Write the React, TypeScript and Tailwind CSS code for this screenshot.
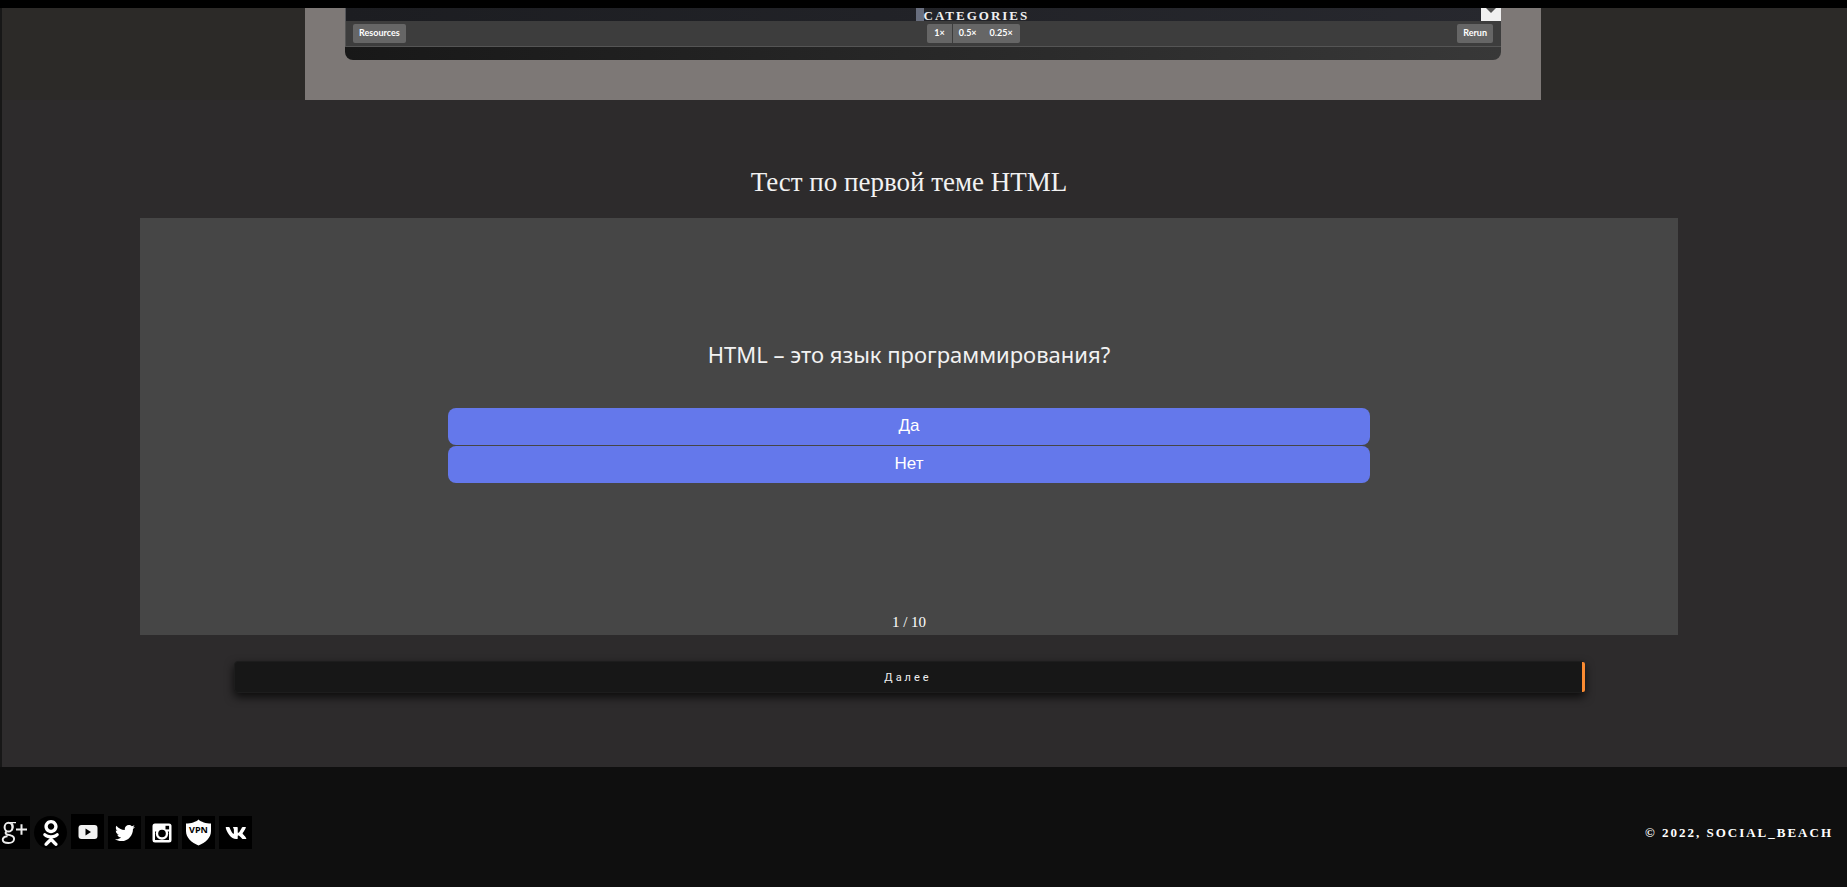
import React, { useState } from "react";
import { FaOdnoklassniki, FaTwitter, FaVk } from "react-icons/fa";

const penButton =
  "h-[19px] bg-[#666666] font-['Lato',sans-serif] text-[9px] leading-[15px] pb-[3px] font-bold text-white";

function PenFooter() {
  return (
    <div className="mr-[306px] ml-[305px] bg-[#7d7876] px-10 pb-10">
      <div className="overflow-hidden rounded-b-lg">
        <div className="grid h-[13px] grid-cols-2 border-l border-[#55565a] bg-linear-to-r from-[#1c1d21] to-[#27282e]">
          <div className="col-start-2 flex h-[13px]">
            <div className="-ml-2 w-2 bg-[#686e7e]" />
            <span className="grow font-['Liberation_Serif',serif] text-[13px] leading-[15px] font-bold tracking-[2px] text-[#f0f0f0]">
              CATEGORIES
            </span>
            <div className="flex w-5 justify-center bg-[#f0f0f0]">
              <svg width="10" height="6" viewBox="0 0 10 6" aria-hidden="true">
                <path d="M0 0h10L5 5z" fill="#505050" />
              </svg>
            </div>
          </div>
        </div>
        <div className="grid h-[26px] grid-cols-3 items-start border-b border-l border-[#555555] bg-[#3d3d3d] pt-[3px] pr-2 pl-[7px]">
          <button className={penButton + " justify-self-start rounded-xs px-[6px]"}>Resources</button>
          <div className="ml-[101px] flex justify-self-center">
            <button className={penButton + " rounded-l-xs border-r border-[#3d3d3d] px-[7px]"}>1×</button>
            <button className={penButton + " px-[6px]"}>0.5×</button>
            <button className={penButton + " rounded-r-xs px-[7px]"}>0.25×</button>
          </div>
          <button className={penButton + " justify-self-end rounded-xs px-[6px]"}>Rerun</button>
        </div>
        <div className="h-[13px] bg-linear-to-r from-[#181818] to-[#383838]" />
      </div>
    </div>
  );
}

function Quiz() {
  const [, setAnswer] = useState("");
  const answers = ["Да", "Нет"];
  return (
    <section className="bg-[#2d2b2c] pt-[62px] pr-[169px] pb-[74px] pl-[138px]">
      <h2 className="h-14 text-center font-['Liberation_Serif',serif] text-[27px] leading-10 text-[#f2f2f2]">
        Тест по первой теме HTML
      </h2>
      <div className="flex flex-col items-center bg-[#464646]">
        <h3 className="mt-[118px] text-center font-['Comic_Sans_MS','Noto_Sans',sans-serif] text-[22px] leading-9 text-[#f2f2f2]">
          HTML – это язык программирования?
        </h3>
        <div className="mt-9 flex w-3/5 flex-col gap-px">
          {answers.map((text) => (
            <button
              key={text}
              onClick={() => setAnswer(text)}
              className="h-[37px] rounded-lg bg-[#6478eb] pb-px font-['Liberation_Sans',sans-serif] text-[17px] text-white"
            >
              {text}
            </button>
          ))}
        </div>
        <p className="mt-[128px] h-6 font-['Liberation_Serif',serif] text-[15px] leading-[22px] text-white">
          1 / 10
        </p>
      </div>
      <div className="mt-[26px] flex pr-[93px] pl-[94px]">
        <button className="relative h-8 grow rounded-sm border border-[#1d1d1d] bg-[#171717] pt-0.5 pr-[3px] font-['Roboto',sans-serif] text-[11px] tracking-[3px] text-[#f0f0f0] shadow-[0_4px_10px_rgba(0,0,0,0.75)]">
          Далее
          <span className="absolute inset-y-0 -right-px w-[3px] rounded-r-xs bg-[#fb8b32]" />
        </button>
      </div>
    </section>
  );
}

const tile = "flex h-[33px] w-[33px] items-center justify-center bg-black text-white";

function Footer() {
  return (
    <footer className="flex grow items-start justify-between bg-[#0f0f0f] pt-[47px]">
      <nav className="flex items-end gap-1">
        <a href="#google" aria-label="Google+" className="flex h-[33px] w-[30px] items-center bg-black">
          <svg width="30" height="33" viewBox="0 0 30 33" fill="none" stroke="#ededed" aria-hidden="true">
            <ellipse cx="8.5" cy="11.2" rx="3.9" ry="4.4" strokeWidth="2" />
            <path d="M8.5 6.6h7.5M12 7.500c1.600 1.300 1.500 5.500-.8 7.300" strokeWidth="1.4" />
            <path d="M6.5 15.500c-2.500 2.500.5 3 4 3.800 5.500 1.400 4.500 7.700-2 7.700-7.500 0-7.500-6-1-6.800" strokeWidth="1.9" />
            <path d="M16 13.500h11M21.500 8.200v10.600" strokeWidth="2" />
          </svg>
        </a>
        <a href="#ok" aria-label="Одноклассники" className={tile + " rounded-full"}>
          <FaOdnoklassniki size={26} />
        </a>
        <a
          href="#youtube"
          aria-label="YouTube"
          className="flex h-[35px] w-[33px] items-center justify-center bg-black"
        >
          <svg width="20" height="16" viewBox="0 0 20 16" aria-hidden="true">
            <rect x="0.5" y="1" width="19" height="14" rx="3" fill="#f2f2f2" />
            <path d="M7.5 4.5v7L13 8z" fill="#000" />
          </svg>
        </a>
        <a href="#twitter" aria-label="Twitter" className={tile}>
          <FaTwitter size={20} />
        </a>
        <a href="#instagram" aria-label="Instagram" className={tile}>
          <svg width="20" height="20" viewBox="0 0 20 20" aria-hidden="true">
            <rect x="0.5" y="0.5" width="19" height="19" rx="2.5" fill="#fff" />
            <path d="M3 8.500h14V17H3z" fill="#000" />
            <circle cx="10" cy="10.500" r="6.200" fill="#fff" />
            <circle cx="10" cy="10.500" r="3.800" fill="#000" />
            <rect x="13.500" y="2.800" width="3.600" height="3.600" fill="#000" />
          </svg>
        </a>
        <a href="#vpn" aria-label="VPN" className={tile}>
          <svg width="27" height="27" viewBox="0 0 27 27" aria-hidden="true">
            <path d="M13.500.5C11 3 6 4.500 1 4.500V12c0 7 5.500 11.500 12.500 14.500C20.500 23.500 26 19 26 12V4.500C21 4.500 16 3 13.500.5z" fill="#fff" />
            <text x="13.500" y="14" textAnchor="middle" fontFamily="Open Sans, sans-serif" fontWeight="700" fontSize="9">
              VPN
            </text>
          </svg>
        </a>
        <a href="#vk" aria-label="ВКонтакте" className={tile}>
          <FaVk size={22} />
        </a>
      </nav>
      <p className="mt-[9px] pr-[14px] font-['Liberation_Serif',serif] text-[13px] leading-5 font-bold tracking-[2px] text-white">
        © 2022, SOCIAL_BEACH
      </p>
    </footer>
  );
}

export default function App() {
  return (
    <div className="flex min-h-screen flex-col bg-[#0f0f0f]">
      <div className="h-2 bg-black" />
      <main className="border-l-2 border-[#171717] bg-[#2c2a28]">
        <div className="-ml-0.5">
          <PenFooter />
        </div>
        <Quiz />
      </main>
      <Footer />
    </div>
  );
}
